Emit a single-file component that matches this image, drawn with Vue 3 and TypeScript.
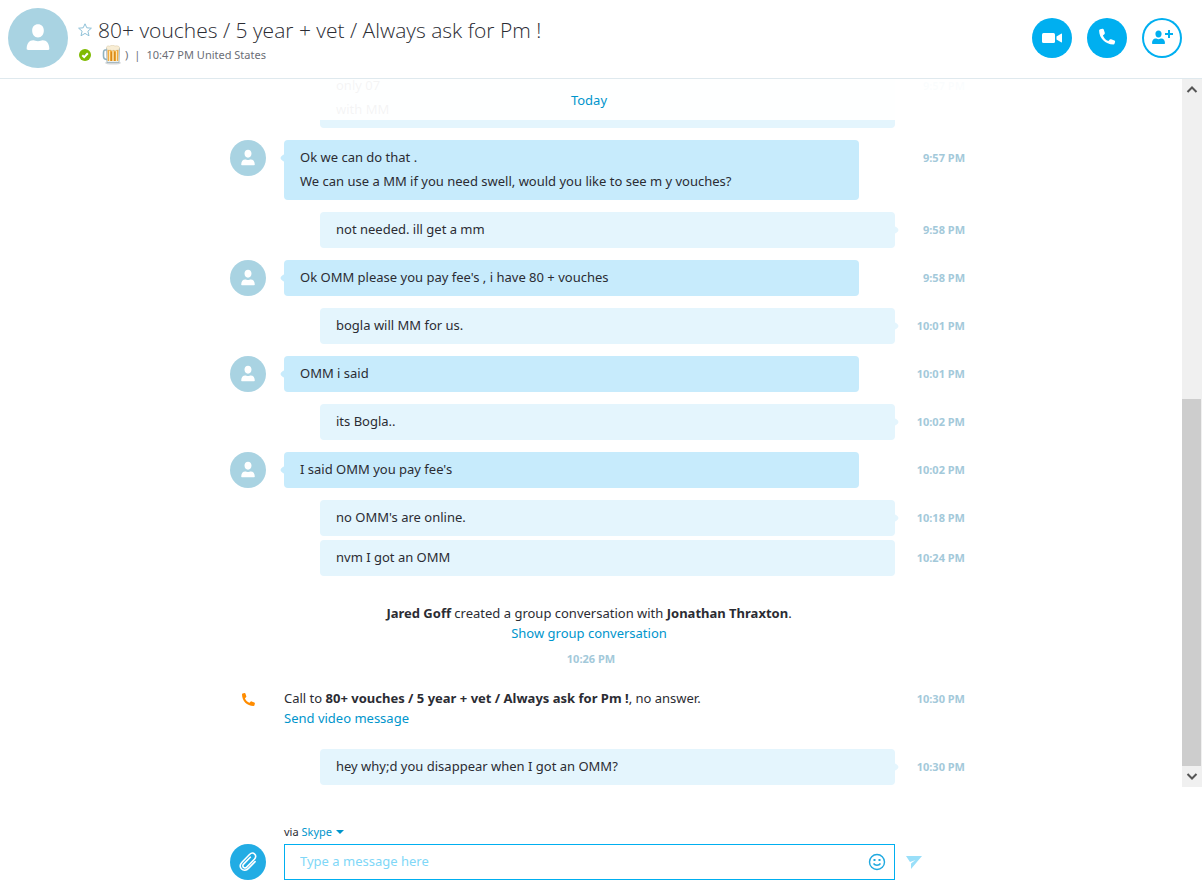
<script setup lang="ts">
import { ref } from 'vue'

interface Message {
  id: number
  own: boolean
  lines: string[]
  time: string
  tail: boolean
  joined?: boolean
}

const title = '80+ vouches / 5 year + vet / Always ask for Pm !'
const draft = ref('')

const messages: Message[] = [
  { id: 1, own: true, lines: ['only 07', 'with MM'], time: '9:57 PM', tail: false },
  {
    id: 2,
    own: false,
    lines: ['Ok we can do that .', 'We can use a MM if you need swell, would you like to see m y vouches?'],
    time: '9:57 PM',
    tail: true,
  },
  { id: 3, own: true, lines: ['not needed. ill get a mm'], time: '9:58 PM', tail: true },
  { id: 4, own: false, lines: ["Ok OMM please you pay fee's , i have 80 + vouches"], time: '9:58 PM', tail: true },
  { id: 5, own: true, lines: ['bogla will MM for us.'], time: '10:01 PM', tail: true },
  { id: 6, own: false, lines: ['OMM i said'], time: '10:01 PM', tail: true },
  { id: 7, own: true, lines: ['its Bogla..'], time: '10:02 PM', tail: true },
  { id: 8, own: false, lines: ["I said OMM you pay fee's"], time: '10:02 PM', tail: true },
  { id: 9, own: true, lines: ["no OMM's are online."], time: '10:18 PM', tail: true },
  { id: 10, own: true, lines: ['nvm I got an OMM'], time: '10:24 PM', tail: false, joined: true },
]
</script>

<template>
  <div class="app">
    <header class="header">
      <svg class="avatar avatar-large" viewBox="0 0 36 36" aria-hidden="true">
        <circle cx="18" cy="18" r="18" />
        <path class="person" d="M18 9.800c2.100 0 3.500 1.500 3.500 3.700 0 2.300-1.400 4.200-3.500 4.200s-3.500-1.900-3.500-4.200c0-2.200 1.400-3.700 3.500-3.700zM11.200 24.500c0-3.200 1.600-5.100 4-5.100.9 0 1.500.6 2.800.6s1.900-.6 2.800-.6c2.400 0 4 1.900 4 5.100 0 .5-.3.700-.7.700H11.900c-.4 0-.7-.2-.7-.7z" />
      </svg>
      <div class="contact">
        <div class="title-row">
          <button class="star" type="button" aria-label="Add to favorites">
            <svg viewBox="0 0 14 14"><path d="M7 .8l1.800 4 4.600.4-3.500 3 1.100 4.600-4-2.400-4 2.400 1.100-4.600-3.500-3 4.600-.4z" /></svg>
          </button>
          <h1>{{ title }}</h1>
        </div>
        <div class="status-row">
          <svg class="online" viewBox="0 0 12 12" role="img" aria-label="Online">
            <circle cx="6" cy="6" r="6" />
            <path d="M3.300 6.200l1.900 1.900 3.600-3.800" />
          </svg>
          <svg class="beer" viewBox="0 0 20 20" role="img" aria-label="Beer">
            <ellipse cx="11" cy="18" rx="8" ry="1.600" fill="#d5d8da" />
            <path d="M5 5H3.200C2 5 1.500 6 1.500 8v3c0 2.500 1 3.500 3.500 3.500" fill="none" stroke="#8fb2bf" stroke-width="1.600" />
            <path d="M4.500 3h13l-.5 14.500H5z" fill="#e8eef0" stroke="#9aaeb5" stroke-width=".8" />
            <path d="M5.500 5h11l-.3 11H5.800z" fill="#f0a32a" />
            <path d="M7.500 6v10M11 6v10M14.500 6v10" stroke="#fbe8bb" stroke-width="1.300" />
            <path d="M9.300 7v9M12.800 7v9" stroke="#c97a10" stroke-width=".8" />
            <path d="M4.500 2.500c0-1.500 2-2 3.200-1.300C9 0 12 .1 13 1.100c2-.7 4.500 0 4.500 1.600 0 2.300-1.800 2.600-2.700 2.200-.9 1.500-2.500 1-2.900.1-1.200 1.200-2.700.8-3.200-.1-1.900.8-4.200-.2-4.200-2.400z" fill="#f8edd4" stroke="#d8c8a4" stroke-width=".5" />
          </svg>
          <span class="mood">)</span>
          <span class="divider">|</span>
          <span>10:47 PM United States</span>
        </div>
      </div>
      <div class="actions">
        <button class="round filled" type="button" aria-label="Video call">
          <svg viewBox="0 0 40 40">
            <rect x="10" y="15" width="13" height="10" rx="1.500" />
            <path d="M24.500 18.600l4.600-2.900c.5-.3.900-.1.900.4v7.800c0 .5-.4.700-.9.400l-4.600-2.900z" />
          </svg>
        </button>
        <button class="round filled" type="button" aria-label="Call">
          <svg viewBox="0 0 40 40">
            <path d="M13.200 11.300l2.200-.5c.7-.1 1.100.2 1.300.8l1.100 3.200c.2.600 0 1-.4 1.400l-1.500 1.200c1 2.600 2.900 4.600 5.500 5.700l1.400-1.500c.4-.4.900-.5 1.400-.3l3.200 1.200c.6.200.8.700.7 1.300l-.5 1.800c-.2.600-.6.900-1.200.9-8.200-.2-14.200-6.300-14.300-14 0-.7.400-1.100 1.100-1.200z" />
          </svg>
        </button>
        <button class="round outlined" type="button" aria-label="Add people">
          <svg viewBox="0 0 40 40">
            <path d="M16.500 12.500c1.900 0 3.100 1.300 3.100 3.300 0 2.100-1.200 3.800-3.100 3.800s-3.100-1.700-3.100-3.800c0-2 1.200-3.300 3.100-3.300zM10 25.200c0-2.900 1.500-4.600 3.700-4.600.8 0 1.500.6 2.800.6s2-.6 2.800-.6c2.200 0 3.700 1.700 3.700 4.600 0 .5-.3.800-.8.800H10.800c-.5 0-.8-.3-.8-.8zM26 12h2v3h3v2h-3v3h-2v-3h-3v-2h3z" />
          </svg>
        </button>
      </div>
    </header>

    <main class="chat">
      <div class="history">
        <div class="day"><button type="button">Today</button></div>
        <div class="column">
          <article
            v-for="m in messages"
            :key="m.id"
            class="row"
            :class="{ joined: m.joined }"
          >
            <svg v-if="!m.own" class="avatar" viewBox="0 0 36 36" aria-hidden="true">
              <circle cx="18" cy="18" r="18" />
              <path class="person" d="M18 9.800c2.100 0 3.500 1.500 3.500 3.700 0 2.300-1.400 4.200-3.500 4.200s-3.500-1.900-3.500-4.200c0-2.200 1.400-3.700 3.500-3.700zM11.200 24.500c0-3.200 1.600-5.100 4-5.100.9 0 1.500.6 2.800.6s1.900-.6 2.800-.6c2.400 0 4 1.900 4 5.100 0 .5-.3.700-.7.700H11.900c-.4 0-.7-.2-.7-.7z" />
            </svg>
            <div class="bubble" :class="{ own: m.own, tail: m.tail }">
              <p v-for="line in m.lines" :key="line">{{ line }}</p>
            </div>
            <time>{{ m.time }}</time>
          </article>

          <section class="notice">
            <p><b>Jared Goff</b> created a group conversation with <b>Jonathan Thraxton</b>.</p>
            <p><a href="#">Show group conversation</a></p>
            <time>10:26 PM</time>
          </section>

          <section class="row call">
            <svg class="call-icon" viewBox="0 0 12 12" aria-hidden="true">
              <path d="M.6.500L2.300.1c.5-.1.800.1.900.5l.8 2.400c.1.400 0 .8-.3 1l-1 .8c.7 1.900 2.200 3.500 4.200 4.300l1-1.100c.3-.3.700-.4 1-.2l2.500.9c.4.200.6.500.5 1l-.4 1.500c-.1.500-.4.700-.9.700C4.500 11.800.100 7.300 0 1.300 0 .800.200.600.600.500z" />
            </svg>
            <div class="call-text">
              <p>Call to <b>{{ title }}</b>, no answer.</p>
              <p><a href="#">Send video message</a></p>
            </div>
            <time>10:30 PM</time>
          </section>

          <article class="row">
            <div class="bubble own tail"><p>hey why;d you disappear when I got an OMM?</p></div>
            <time>10:30 PM</time>
          </article>
        </div>
      </div>
      <div class="scrollbar">
        <button type="button" aria-label="Scroll up">
          <svg viewBox="0 0 20 20"><path d="M5.500 13l4.500-4.500 4.500 4.500" /></svg>
        </button>
        <div class="track"><div class="thumb"></div></div>
        <button type="button" aria-label="Scroll down">
          <svg viewBox="0 0 20 20"><path d="M5.500 7l4.500 4.500L14.500 7" /></svg>
        </button>
      </div>
    </main>

    <footer class="composer">
      <div class="column">
        <div class="via">via <button type="button">Skype<svg viewBox="0 0 8 4" aria-hidden="true"><path d="M0 0h8L4 4z" /></svg></button></div>
        <form class="compose-row" @submit.prevent>
          <button class="attach" type="button" aria-label="Attach a file">
            <svg viewBox="0 0 36 36">
              <path d="M20.300 13.200l-6.700 6.900c-1 1-1 2.400-.1 3.200.9.900 2.200.8 3.200-.2l7.700-7.900c1.600-1.600 1.700-3.800.3-5.100-1.400-1.400-3.600-1.200-5.200.4l-7.300 7.500c-2.300 2.400-2.400 5.200-.6 7 1.800 1.800 4.700 1.600 6.900-.6l6.600-6.800" />
            </svg>
          </button>
          <div class="field">
            <input v-model="draft" type="text" placeholder="Type a message here" aria-label="Message" />
            <button type="button" aria-label="Emoticons">
              <svg viewBox="0 0 18 18">
                <circle cx="9" cy="9" r="7.500" />
                <path d="M5.500 10.500c1.500 2.300 5.500 2.300 7 0" />
                <path class="eyes" d="M5.500 6h2v2h-2zM10.500 6h2v2h-2z" />
              </svg>
            </button>
          </div>
          <button class="send" type="submit" aria-label="Send">
            <svg viewBox="0 0 16 13"><path d="M0 0h16L5 13V7.500L9.500 4 4 6z" /></svg>
          </button>
        </form>
      </div>
    </footer>
  </div>
</template>

<style>
body {
  margin: 0;
  background: #fff;
}
</style>

<style scoped>
.app {
  display: flex;
  flex-direction: column;
  height: 100vh;
  overflow: hidden;
  color: #2b2c33;
  font-family: "Noto Sans", "Open Sans", sans-serif;
  font-size: 11px;
  line-height: 20px;
}
button {
  padding: 0;
  border: 0;
  background: none;
  color: inherit;
  font: inherit;
  cursor: pointer;
}
svg {
  display: block;
}
p,
h1 {
  margin: 0;
}
a,
.day button,
.via button {
  color: #0095cc;
  text-decoration: none;
}
time {
  color: #a3c9da;
  font-weight: 700;
}

.header {
  display: flex;
  flex: none;
  align-items: center;
  box-sizing: border-box;
  height: 79px;
  padding: 0 20px 2px 8px;
  border-bottom: 1px solid #dfe9ee;
}
.avatar {
  width: 36px;
  height: 36px;
  fill: #a9d3e2;
}
.avatar .person {
  fill: #fff;
}
.avatar-large {
  flex: none;
  width: 60px;
  height: 60px;
}
.contact {
  flex: 1;
  min-width: 0;
  padding: 4px 0 0 10px;
}
.title-row,
.status-row {
  display: flex;
  align-items: center;
}
.star svg {
  width: 14px;
  height: 14px;
  fill: none;
  stroke: #8fc1d8;
}
h1 {
  margin-left: 6px;
  overflow: hidden;
  font-family: "Open Sans", "Noto Sans", sans-serif;
  font-size: 21px;
  font-weight: 300;
  line-height: 30px;
  white-space: nowrap;
}
.status-row {
  color: #6b6e76;
}
.online {
  width: 12px;
  height: 12px;
  margin-left: 1px;
  fill: #7fba00;
}
.online path {
  fill: none;
  stroke: #fff;
  stroke-width: 2;
}
.beer {
  width: 20px;
  height: 20px;
  margin-left: 11px;
}
.mood {
  margin-left: 3px;
}
.divider {
  margin: 0 6px;
}
.actions {
  display: flex;
  gap: 15px;
}
.round {
  width: 40px;
  height: 40px;
  border-radius: 50%;
}
.round svg {
  width: 40px;
  height: 40px;
}
.filled {
  background: #00aff0;
  fill: #fff;
}
.outlined {
  box-shadow: inset 0 0 0 2px #00aff0;
  fill: #00aff0;
}

.chat {
  display: flex;
  flex: 1;
  min-height: 0;
}
.history {
  position: relative;
  display: flex;
  flex: 1;
  flex-direction: column;
  justify-content: flex-end;
  overflow: hidden;
  padding-bottom: 2px;
}
.day {
  position: absolute;
  z-index: 1;
  top: 0;
  right: 0;
  left: 0;
  padding: 11px 4px 9px 0;
  background: rgba(255, 255, 255, 0.95);
  text-align: center;
}
.day button,
.notice p,
.call-text,
.bubble {
  font-size: 13px;
}
.column {
  box-sizing: border-box;
  width: 100%;
  max-width: 750px;
  margin: 0 auto;
  padding-left: 14px;
}
.row {
  display: grid;
  grid-template-columns: 54px 1fr 71px;
  margin-top: 12px;
}
.joined {
  margin-top: 4px;
}
.row > time {
  grid-column: 3;
  grid-row: 1;
  padding-right: 1px;
  line-height: 36px;
  text-align: right;
}
.bubble {
  position: relative;
  grid-column: 2;
  grid-row: 1;
  margin-right: 36px;
  padding: 5px 16px 7px;
  border-radius: 4px;
  background: #c7ebfc;
  line-height: 24px;
}
.bubble.own {
  margin-right: 0;
  margin-left: 36px;
  background: #e4f5fd;
}
.bubble.tail::before {
  position: absolute;
  top: 15px;
  left: -3px;
  width: 6px;
  height: 6px;
  border-radius: 2px;
  background: inherit;
  content: "";
  transform: rotate(45deg);
}
.bubble.own.tail::before {
  right: -3px;
  left: auto;
}
.notice {
  padding: 27px 18px 0 0;
  text-align: center;
}
.notice time {
  display: block;
  padding: 6px 0 0 4px;
}
.call {
  margin: 19px 0 21px;
}
.call-icon {
  width: 13px;
  height: 13px;
  margin: 5px 0 0 12px;
  fill: #ff8c00;
}
.call-text {
  white-space: nowrap;
}
.call > time {
  line-height: 22px;
}

.scrollbar {
  display: flex;
  flex-direction: column;
  width: 20px;
  background: #f0f0f0;
}
.scrollbar svg {
  width: 20px;
  height: 20px;
  fill: none;
  stroke: #555;
  stroke-width: 2;
}
.track {
  display: flex;
  flex: 1;
  flex-direction: column;
  justify-content: flex-end;
  padding-bottom: 1px;
}
.thumb {
  height: 55%;
  margin-right: 1px;
  background: #cdcdcd;
}

.composer {
  flex: none;
  padding: 35px 20px 8px 0;
}
.via {
  padding: 0 0 2px 54px;
}
.via button {
  display: inline-flex;
  align-items: center;
  gap: 4px;
}
.via svg {
  width: 8px;
  height: 4px;
  fill: #0095cc;
}
.compose-row {
  display: flex;
  align-items: center;
}
.attach {
  width: 36px;
  height: 36px;
  margin-right: 18px;
  border-radius: 50%;
  background: #22ace4;
}
.attach svg {
  width: 36px;
  height: 36px;
  fill: none;
  stroke: #fff;
  stroke-width: 1.6;
  stroke-linecap: round;
}
.field {
  display: flex;
  flex: 1;
  align-items: center;
  box-sizing: border-box;
  height: 36px;
  padding: 0 8px 0 15px;
  border: 1px solid #00aff0;
}
.field input {
  flex: 1;
  min-width: 0;
  padding: 0 0 2px;
  border: 0;
  outline: 0;
  background: none;
  color: inherit;
  font: inherit;
  font-size: 13px;
}
.field input::placeholder {
  color: #80d7f7;
  opacity: 1;
}
.field svg {
  width: 18px;
  height: 18px;
  fill: none;
  stroke: #1fa9e0;
  stroke-width: 1.4;
}
.field svg .eyes {
  fill: #1fa9e0;
  stroke: none;
}
.send {
  width: 60px;
  margin-left: 11px;
}
.send svg {
  width: 16px;
  height: 13px;
  fill: #99dff9;
}
</style>
